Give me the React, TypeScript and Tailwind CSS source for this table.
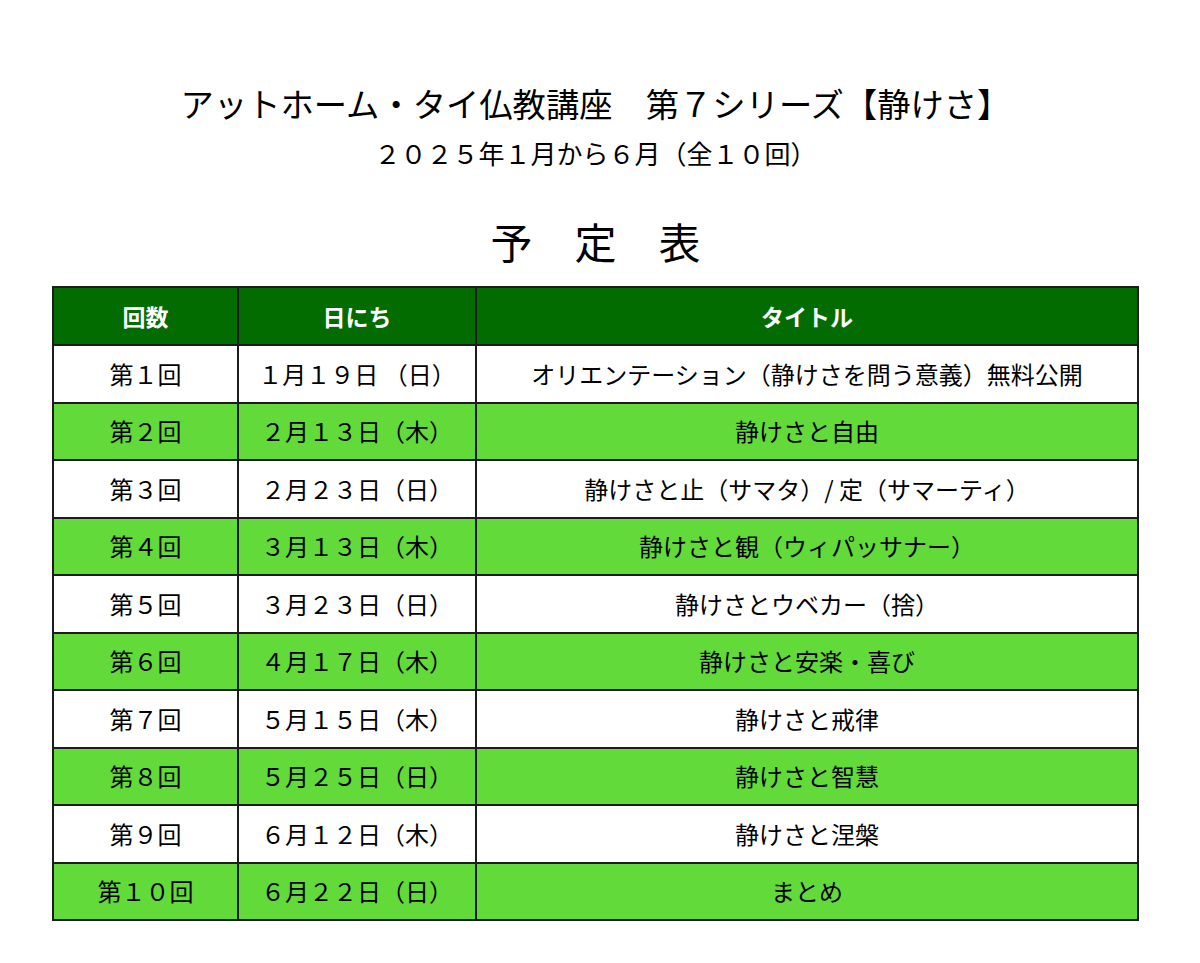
const rows = [
  { no: '第１回', date: '１月１９日 （日）', title: 'オリエンテーション（静けさを問う意義）無料公開' },
  { no: '第２回', date: '２月１３日（木）', title: '静けさと自由' },
  { no: '第３回', date: '２月２３日（日）', title: '静けさと止（サマタ）/ 定（サマーティ）' },
  { no: '第４回', date: '３月１３日（木）', title: '静けさと観（ウィパッサナー）' },
  { no: '第５回', date: '３月２３日（日）', title: '静けさとウベカー（捨）' },
  { no: '第６回', date: '４月１７日（木）', title: '静けさと安楽・喜び' },
  { no: '第７回', date: '５月１５日（木）', title: '静けさと戒律' },
  { no: '第８回', date: '５月２５日（日）', title: '静けさと智慧' },
  { no: '第９回', date: '６月１２日（木）', title: '静けさと涅槃' },
  { no: '第１０回', date: '６月２２日（日）', title: 'まとめ' },
]

export default function App() {
  return (
    <div
      className="w-[1200px] h-[963px] bg-white text-black flex flex-col items-center pt-[83px] pr-[9px]"
      style={{ fontFamily: '"Noto Sans CJK JP", "Noto Sans", sans-serif' }}
    >
      <h1 className="text-[33.3px] leading-[40px] font-normal">
        アットホーム・タイ仏教講座　第７シリーズ【静けさ】
      </h1>
      <p className="mt-[15px] text-[26px] leading-[30px]">２０２５年１月から６月（全１０回）</p>
      <h2 className="mt-[48px] text-[42px] leading-[50px] font-normal">予　定　表</h2>

      <table className="mt-[20px] w-[1087px] border-collapse border-2 border-[#1c1c1c] text-[24px] table-fixed">
        <colgroup>
          <col className="w-[185px]" />
          <col className="w-[238px]" />
          <col />
        </colgroup>
        <thead>
          <tr className="h-[58px] bg-[#026c01] text-white text-[23px] font-bold">
            <th className="border-2 border-[#1c1c1c]">回数</th>
            <th className="border-2 border-[#1c1c1c]">日にち</th>
            <th className="border-2 border-[#1c1c1c]">タイトル</th>
          </tr>
        </thead>
        <tbody>
          {rows.map((r, i) => (
            <tr key={r.no} className={`h-[57.5px] ${i % 2 === 1 ? 'bg-[#62da3a]' : 'bg-white'}`}>
              <td className="border-2 border-[#1c1c1c] text-center">{r.no}</td>
              <td className="border-2 border-[#1c1c1c] text-center">{r.date}</td>
              <td className="border-2 border-[#1c1c1c] text-center">{r.title}</td>
            </tr>
          ))}
        </tbody>
      </table>
    </div>
  )
}
